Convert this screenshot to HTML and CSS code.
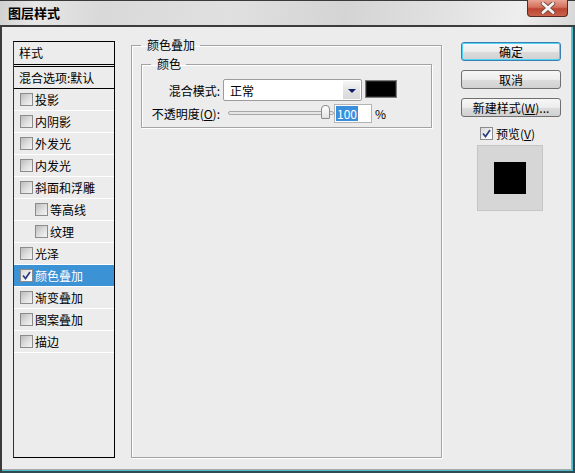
FILE: index.html
```html
<!DOCTYPE html>
<html lang="zh-CN">
<head>
<meta charset="utf-8">
<title>图层样式</title>
<link rel="stylesheet" href="styles.css">
</head>
<body>
<div class="window">
  <div class="titlebar">
    <span class="title">图层样式</span>
    <div class="close">
      <svg width="16" height="12" viewBox="0 0 16 12">
        <path d="M3 1.5 L13 10.5 M13 1.5 L3 10.5" stroke="#7a4a40" stroke-width="4.6" stroke-linecap="round" fill="none"/>
        <path d="M3 1.5 L13 10.5 M13 1.5 L3 10.5" stroke="#f4f4f4" stroke-width="2.8" stroke-linecap="round" fill="none"/>
      </svg>
    </div>
  </div>
  <div class="frame">
    <div class="list">
      <div class="list-head">样式</div>
      <div class="list-blend">混合选项:默认</div>
      <div class="item"><span class="cb"></span>投影</div>
      <div class="item"><span class="cb"></span>内阴影</div>
      <div class="item"><span class="cb"></span>外发光</div>
      <div class="item"><span class="cb"></span>内发光</div>
      <div class="item"><span class="cb"></span>斜面和浮雕</div>
      <div class="item sub"><span class="cb"></span>等高线</div>
      <div class="item sub"><span class="cb"></span>纹理</div>
      <div class="item"><span class="cb"></span>光泽</div>
      <div class="item selected"><span class="cb checked"><svg width="11" height="11" viewBox="0 0 11 11"><path d="M2 5.5 L4.5 8.5 L9 2" stroke="#2a3d80" stroke-width="1.7" fill="none"/></svg></span>颜色叠加</div>
      <div class="item"><span class="cb"></span>渐变叠加</div>
      <div class="item"><span class="cb"></span>图案叠加</div>
      <div class="item"><span class="cb"></span>描边</div>
    </div>

    <fieldset class="group outer">
      <legend>颜色叠加</legend>
      <fieldset class="group inner">
        <legend>颜色</legend>
        <div class="row row-mode">
          <span class="lbl">混合模式:</span>
          <div class="select"><span class="sel-text">正常</span><span class="arrow"></span></div>
          <div class="swatch"></div>
        </div>
        <div class="row row-opacity">
          <span class="lbl">不透明度(<u>O</u>):</span>
          <div class="slider"><div class="track"></div><div class="thumb"></div></div>
          <div class="num"><span class="hl">100</span></div>
          <span class="pct">%</span>
        </div>
      </fieldset>
    </fieldset>

    <div class="side">
      <div class="btn default">确定</div>
      <div class="btn">取消</div>
      <div class="btn">新建样式(<u>W</u>)...</div>
      <div class="preview-row"><span class="cb checked"><svg width="11" height="11" viewBox="0 0 11 11"><path d="M2 5.5 L4.5 8.5 L9 2" stroke="#2a3d80" stroke-width="1.7" fill="none"/></svg></span>预览(<u>V</u>)</div>
      <div class="preview-box"><div class="preview-square"></div></div>
    </div>
  </div>
</div>
</body>
</html>
```

FILE: styles.css
```css
* { box-sizing: border-box; }

body {
  margin: 0;
  width: 575px;
  height: 473px;
  overflow: hidden;
  background: #ececec;
  font-family: "Noto Sans CJK SC", "Liberation Sans", sans-serif;
  font-size: 12px;
  color: #000;
}

.window {
  width: 575px;
  height: 473px;
  display: flex;
  flex-direction: column;
  background: #ececec;
}

.titlebar {
  flex: none;
  height: 27px;
  display: flex;
  justify-content: space-between;
  align-items: flex-start;
  border-top: 1px solid #3a3a3a;
  border-bottom: 2px solid #3c3c3c;
  background: linear-gradient(100deg, #d0d0d0 0%, #e6e6e6 6%, #d9d9d9 18%, #e0e0e0 40%, #d4d4d4 60%, #e2e2e2 78%, #eeeeee 90%, #d8d8d8 100%);
}

.title {
  font-weight: bold;
  font-size: 13px;
  line-height: 24px;
  padding-left: 8px;
}

.close {
  width: 41px;
  height: 17px;
  margin-top: -1px;
  margin-right: 7px;
  border: 1px solid #5a2a22;
  border-top: none;
  border-radius: 0 0 4px 4px;
  background: linear-gradient(#e9a393, #d4705c 45%, #bb4430 55%, #c9624e);
  display: flex;
  align-items: center;
  justify-content: center;
}

.frame {
  flex: 1;
  display: flex;
  align-items: flex-start;
  padding: 14px 0 0 11px;
  border-left: 2px solid #3b3b3b;
  border-right: 2px solid #2f4a50;
  border-bottom: 2px solid #2f4a50;
  box-shadow: inset -1px -1px 0 #4fbccc, inset -2px -2px 0 #a8a8a8;
}

/* ---- left list ---- */
.list {
  flex: none;
  width: 102px;
  height: 417px;
  border: 1px solid #000;
  border-left-color: #333;
}

.list-head {
  height: 25px;
  line-height: 22px;
  padding-left: 5px;
  border-bottom: 3px double #000;
}

.list-blend {
  height: 22px;
  line-height: 21px;
  padding-left: 5px;
  border-bottom: 1px solid #000;
  white-space: nowrap;
}

.item {
  height: 22px;
  display: flex;
  align-items: center;
  padding-left: 6px;
  border-bottom: 1px solid #fff;
  white-space: nowrap;
}

.item.sub { padding-left: 21px; }

.item.selected {
  background: #3b92d4;
  color: #fff;
}

.cb {
  flex: none;
  width: 13px;
  height: 13px;
  margin-right: 2px;
  border: 1px solid #8c8c8c;
  background: linear-gradient(135deg, #bcbcbc, #e2e2e2 60%, #f4f4f4);
  display: flex;
  align-items: center;
  justify-content: center;
}

.cb.checked {
  background: linear-gradient(135deg, #d6d6d6, #f4f4f4 60%, #ffffff);
}

/* ---- group boxes ---- */
.group {
  margin: 0;
  min-width: 0;
  border: 1px solid #a3a3a3;
  box-shadow: 1px 1px 0 #fff, inset 1px 1px 0 #fff;
}

.group legend {
  padding: 0 5px 0 6px;
  line-height: 14px;
}

.outer {
  flex: none;
  width: 311px;
  height: 420px;
  margin: -3px 0 0 16px;
  padding: 5px 9px 0 9px;
}

.inner {
  width: 291px;
  padding: 8px 0 5px 9px;
}

.row {
  display: flex;
  align-items: center;
}

.row-mode { height: 22px; }
.row-opacity { height: 18px; margin-top: 3px; }

.lbl {
  flex: none;
  width: 69px;
  text-align: right;
  white-space: nowrap;
}

.select {
  width: 139px;
  height: 22px;
  margin-left: 3px;
  border: 1px solid #9c9c9c;
  border-radius: 2px;
  background: #fff;
  display: flex;
  align-items: center;
  justify-content: space-between;
  padding: 1px;
}

.sel-text { padding-left: 5px; }

.arrow {
  width: 17px;
  height: 18px;
  background: linear-gradient(#f6f6f6, #e4e4e4 50%, #d8d8d8);
  display: flex;
  align-items: center;
  justify-content: center;
}

.arrow::before {
  content: "";
  border-left: 4px solid transparent;
  border-right: 4px solid transparent;
  border-top: 4px solid #0c1a6e;
  margin-top: 2px;
}

.swatch {
  width: 32px;
  height: 18px;
  margin-left: 3px;
  margin-top: -2px;
  border: 1px solid #7c7c7c;
  background: #000;
  box-shadow: inset 0 0 0 1px #222;
}

.slider {
  position: relative;
  width: 106px;
  height: 18px;
  margin-left: 8px;
}

.track {
  margin-top: 7px;
  height: 4px;
  border: 1px solid #a8a8a8;
  border-radius: 2px;
  background: #e6e6e6;
}

.thumb {
  position: absolute;
  left: 93px;
  top: 1px;
  width: 9px;
  height: 14px;
  border: 1px solid #8a8a8a;
  border-radius: 4px 4px 1px 1px;
  background: linear-gradient(#ffffff, #e2e2e2);
}

.num {
  width: 38px;
  height: 19px;
  border: 1px solid #b4b4b4;
  background: #fff;
  padding-left: 1px;
  display: flex;
  align-items: center;
}

.hl {
  background: #3a8fdc;
  color: #fff;
  line-height: 15px;
  padding: 0 1px;
}

.pct { margin-left: 3px; }

/* ---- right column ---- */
.side {
  flex: none;
  width: 100px;
  margin: 1px 0 0 19px;
  display: flex;
  flex-direction: column;
}

.btn {
  height: 19px;
  line-height: 17px;
  text-align: center;
  border: 1px solid #707070;
  border-radius: 3px;
  background: linear-gradient(#f7f7f7, #ececec 50%, #dddddd 51%, #d0d0d0);
  margin-bottom: 9px;
  white-space: nowrap;
}

.btn.default {
  border-color: #3c7fb1;
  box-shadow: inset 0 0 0 1px #4fd3f4;
}

.preview-row {
  display: flex;
  align-items: center;
  height: 14px;
  margin-left: 19px;
  white-space: nowrap;
}

.preview-row .cb { margin-right: 3px; }

.preview-box {
  width: 66px;
  height: 66px;
  margin: 5px 0 0 16px;
  border: 1px solid #c6c6c6;
  background: #d6d6d6;
  display: flex;
  align-items: center;
  justify-content: center;
}

.preview-square {
  width: 32px;
  height: 32px;
  background: #000;
}
```
